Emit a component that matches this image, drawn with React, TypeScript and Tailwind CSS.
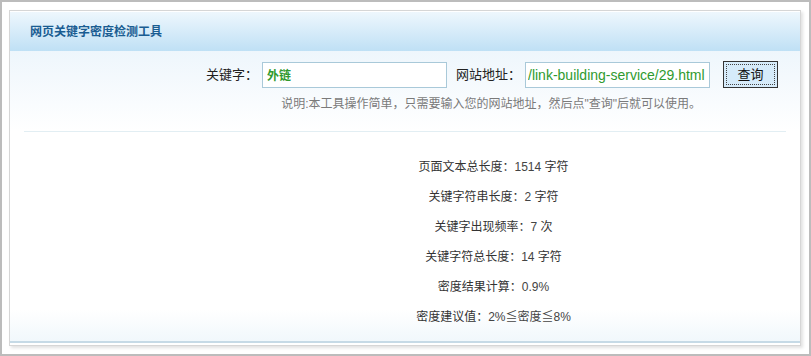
const font = { fontFamily: '"Liberation Sans", "Noto Sans CJK SC", sans-serif' };

const results = [
  { label: "页面文本总长度：", value: "1514", unit: " 字符" },
  { label: "关键字符串长度：", value: "2", unit: " 字符" },
  { label: "关键字出现频率：", value: "7", unit: " 次" },
  { label: "关键字符总长度：", value: "14", unit: " 字符" },
  { label: "密度结果计算：", value: "0.9%", unit: "" },
  { label: "密度建议值：", value: "2%≦密度≦8%", unit: "" },
];

export default function App() {
  return (
    <div
      className="w-[811px] h-[356px] bg-white border-2 border-[#bcbcbc] pl-[7px] pr-[8px] pt-[8px] pb-[8px]"
      style={font}
    >
      <div className="h-[336px] border border-[#d6d6d6] bg-white shadow-[2px_2px_3px_rgba(0,0,0,0.12)] flex flex-col">
        {/* header */}
        <div className="h-[40px] border-t border-white bg-gradient-to-b from-[#eef7fd] to-[#bfe0f5] flex items-center pl-[20px]">
          <span className="text-[12px] font-bold text-[#1a5d92]">网页关键字密度检测工具</span>
        </div>

        {/* form */}
        <div className="h-[80px] bg-gradient-to-b from-[#eef6fc] to-white flex flex-col">
          <div className="flex items-center justify-end pr-[22px] pt-[10px]">
            <span className="text-[13px] text-[#222] mr-[4px]">关键字：</span>
            <input
              readOnly
              value="外链"
              className="w-[185px] h-[26px] border border-[#a9c9d9] bg-white px-[4px] text-[12px] font-bold text-[#2f9a2f] outline-none"
            />
            <span className="text-[13px] text-[#222] ml-[9px] mr-[4px]">网站地址：</span>
            <input
              readOnly
              value="/link-building-service/29.html"
              className="w-[185px] h-[26px] border border-[#a9c9d9] bg-white px-[2px] text-[14px] text-[#2f9a2f] outline-none"
            />
            <button className="ml-[13px] w-[55px] h-[27px] border border-[#333] bg-[#d6ebfa] p-[2px]">
              <span className="flex h-full w-full items-center justify-center border border-dotted border-[#444] text-[13px] text-[#111]">
                查询
              </span>
            </button>
          </div>
          <div className="flex justify-end pr-[99px] pt-[7px]">
            <span className="text-[12px] text-[#7a7a7a]">
              说明:本工具操作简单，只需要输入您的网站地址，然后点"查询"后就可以使用。
            </span>
          </div>
        </div>

        <div className="mx-[14px] h-px bg-[#e2eef3]" />

        {/* results */}
        <div className="flex-1 flex flex-col items-center pl-[177px] pt-[26px] gap-[12px] bg-gradient-to-b from-white from-85% to-[#f1f8fc]">
          {results.map((r) => (
            <div key={r.label} className="h-[18px] leading-[18px] text-[12px] text-[#333]">
              {r.label}
              <span className="text-[#444]">{r.value}</span>
              {r.unit}
            </div>
          ))}
        </div>
        <div className="h-[2px] bg-[#c6dae6]" />
        <div className="h-[2px] bg-white" />
      </div>
    </div>
  );
}
